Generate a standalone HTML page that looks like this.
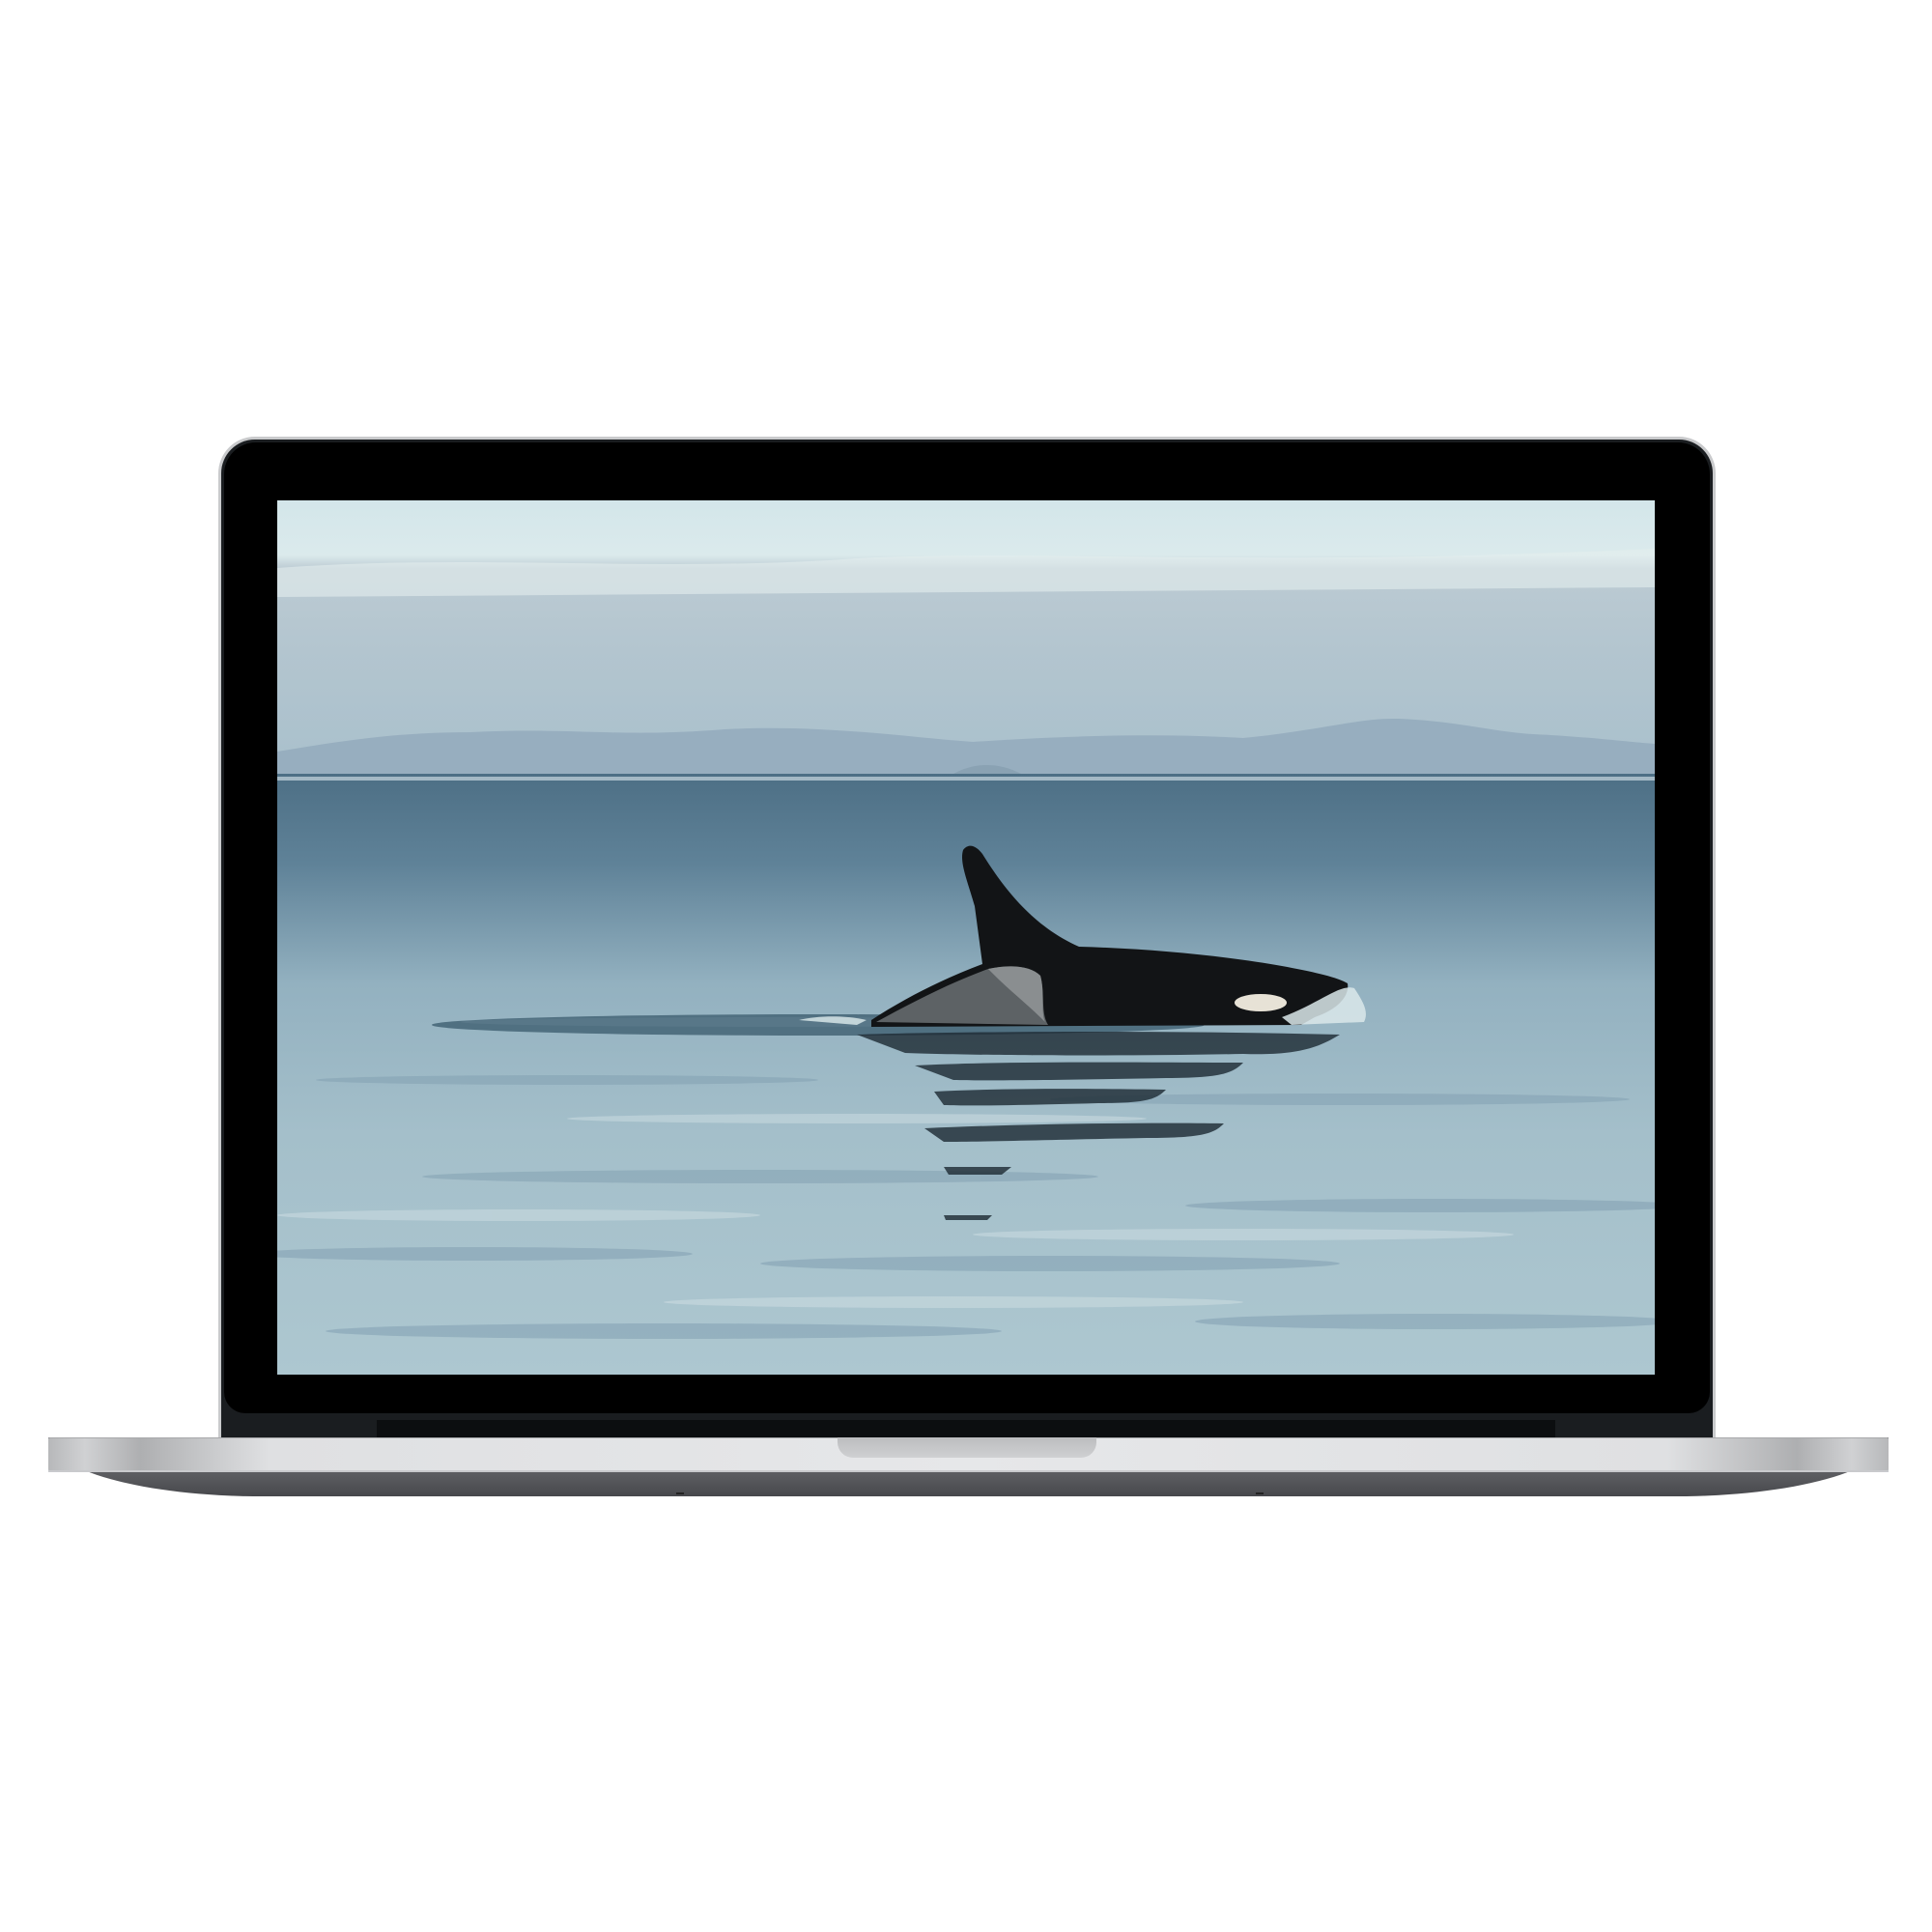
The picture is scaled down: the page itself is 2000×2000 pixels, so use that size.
<!DOCTYPE html>
<html><head><meta charset="utf-8"><style>
html,body{margin:0;padding:0;background:#fff;width:2000px;height:2000px;overflow:hidden}
.abs{position:absolute}
</style></head><body>
<!-- lid -->
<div class="abs" style="left:226px;top:452px;width:1550px;height:1050px;border-radius:38px 38px 0 0;background:#c9cacc;"></div>
<div class="abs" style="left:229px;top:455px;width:1544px;height:1040px;border-radius:35px 35px 0 0;background:#1a1d20;"></div>
<div class="abs" style="left:232px;top:458px;width:1538px;height:1005px;border-radius:33px 33px 22px 22px;background:#000;"></div>
<div class="abs" style="left:390px;top:1470px;width:1220px;height:20px;background:#0c0e10;"></div>
<!-- screen -->
<svg class="abs" style="left:287px;top:518px" width="1426" height="905" viewBox="0 0 1426 905">
<defs>
<linearGradient id="sky" x1="0" y1="0" x2="0" y2="1">
<stop offset="0" stop-color="#d3e6ea"/><stop offset="0.2" stop-color="#dbeaec"/><stop offset="0.25" stop-color="#bccbd3"/><stop offset="0.55" stop-color="#b3c5cf"/><stop offset="1" stop-color="#a9c0cc"/></linearGradient>
<linearGradient id="sea" x1="0" y1="0" x2="0" y2="1">
<stop offset="0" stop-color="#4d6f85"/><stop offset="0.15" stop-color="#5f8298"/><stop offset="0.35" stop-color="#93b1c0"/><stop offset="0.6" stop-color="#a4bfca"/><stop offset="1" stop-color="#adc7d0"/></linearGradient>
</defs>
<rect width="1426" height="283" fill="url(#sky)"/>
<path d="M0,70 C200,55 400,75 600,60 C800,50 1000,70 1426,50 L1426,90 L0,100Z" fill="#e4efef" opacity="0.6"/>
<path d="M0,283 L0,260 C60,250 120,240 200,240 C300,235 350,245 450,238 C550,230 650,245 720,250 C800,245 900,240 1000,246 C1080,238 1120,225 1160,226 C1220,228 1260,240 1300,242 C1360,245 1400,250 1426,252 L1426,283Z" fill="#97aebf"/>
<path d="M700,283 C720,272 745,270 770,283Z" fill="#8aa2b3"/>
<rect y="283" width="1426" height="622" fill="url(#sea)"/>
<rect y="286" width="1426" height="4" fill="#c9d9df" opacity="0.7"/>
<g fill="#7f9db0" opacity="0.5">
<ellipse cx="300" cy="600" rx="260" ry="5"/><ellipse cx="1100" cy="620" rx="300" ry="6"/>
<ellipse cx="500" cy="700" rx="350" ry="7"/><ellipse cx="1200" cy="730" rx="260" ry="7"/>
<ellipse cx="200" cy="780" rx="230" ry="7"/><ellipse cx="800" cy="790" rx="300" ry="8"/>
<ellipse cx="400" cy="860" rx="350" ry="8"/><ellipse cx="1200" cy="850" rx="250" ry="8"/>
</g>
<g fill="#d4e2e6" opacity="0.45">
<ellipse cx="600" cy="640" rx="300" ry="5"/><ellipse cx="250" cy="740" rx="250" ry="6"/>
<ellipse cx="1000" cy="760" rx="280" ry="6"/><ellipse cx="700" cy="830" rx="300" ry="6"/>
</g>
<!-- wake -->
<ellipse cx="560" cy="543" rx="400" ry="11" fill="#3e5f70" opacity="0.8"/>
<ellipse cx="520" cy="540" rx="330" ry="5" fill="#5b7b8c" opacity="0.7"/>
<!-- reflection -->
<g fill="#1d2a33" opacity="0.8">
<path d="M600,553 C700,550 900,548 1100,553 C1080,565 1060,575 1000,573 C850,576 700,574 650,572Z"/>
<path d="M660,585 C760,580 900,582 1000,582 C990,592 980,598 920,598 C820,600 740,601 700,600Z"/>
<path d="M680,612 C760,608 850,609 920,610 C910,620 900,624 850,624 C780,626 720,627 690,626Z"/>
<path d="M670,650 C780,645 900,644 980,645 C970,655 960,660 900,660 C800,662 730,664 690,664Z"/>
<path d="M690,690 L760,690 L750,698 L695,698Z"/>
<path d="M690,740 L740,740 L735,745 L692,745Z"/>
</g>
<!-- orca -->
<path d="M615,538 C650,515 690,495 730,480 L722,420 C715,395 706,375 710,362 C716,354 724,358 730,366 C750,398 780,440 830,462 C905,464 985,472 1040,482 C1072,488 1096,493 1108,500 C1110,512 1100,526 1074,535 L1060,543 L615,545Z" fill="#121416"/>
<path d="M620,540 C660,518 700,498 736,485 C760,480 780,482 790,492 C795,510 790,530 798,543Z" fill="#5d6265"/>
<path d="M736,485 C760,480 780,482 790,492 C795,510 790,530 795,540 C775,520 755,505 736,485Z" fill="#8a8e90"/>
<ellipse cx="1018" cy="520" rx="27" ry="9" fill="#e7e2d6"/>
<path d="M1040,535 C1080,520 1100,500 1115,505 C1125,520 1130,530 1125,540 L1050,543Z" fill="#dbe8ea" opacity="0.85"/>
<path d="M540,538 C560,533 590,533 610,538 L600,543Z" fill="#dfecee" opacity="0.8"/>
</svg>
<!-- base -->
<div class="abs" style="left:50px;top:1488px;width:1905px;height:61px;border-radius:0 0 220px 220px / 0 0 61px 61px;background:linear-gradient(#7e7f83,#47484c);"></div>
<div class="abs" style="left:50px;top:1488px;width:1905px;height:35px;border-radius:2px;background:linear-gradient(90deg,#b7b8ba 0%,#d0d1d3 2%,#aeafb1 5%,#dfe0e2 12%,#e6e7e9 50%,#dfe0e2 88%,#aeafb1 95%,#d0d1d3 98%,#b7b8ba 100%);border-top:1px solid #a8a9ab;box-sizing:border-box;"></div>
<div class="abs" style="left:50px;top:1522px;width:1905px;height:2px;background:#c9cacd"></div>
<div class="abs" style="left:867px;top:1488px;width:268px;height:21px;border-radius:0 0 16px 16px;background:linear-gradient(#bcbdbf,#cfd0d2);"></div>
<div class="abs" style="left:700px;top:1545px;width:8px;height:2px;background:#222"></div>
<div class="abs" style="left:1300px;top:1545px;width:8px;height:2px;background:#222"></div>
</body></html>
